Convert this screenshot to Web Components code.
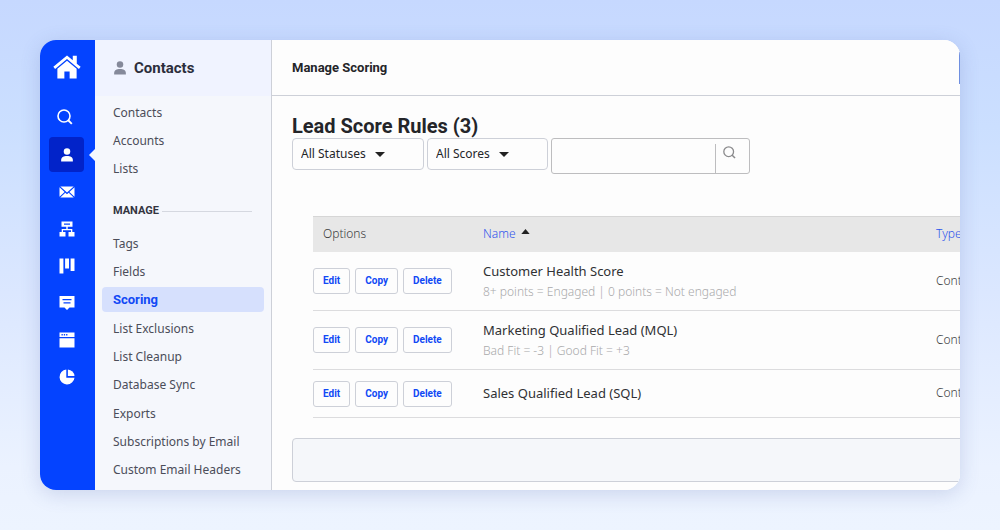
<!DOCTYPE html>
<html lang="en">
<head>
<meta charset="utf-8">
<meta name="viewport" content="width=device-width, initial-scale=1">
<title>Manage Scoring</title>
<style>
  :root {
    --blue: #0443ff;
    --link: #1149f5;
    --ink: #242529;
    --line: #cdd0d8;
    --paper: #fdfdfd;
    --strong: Roboto, "Noto Sans", sans-serif;
  }
  * { box-sizing: border-box; }
  body {
    margin: 0;
    min-height: 100vh;
    display: flex;
    padding: 40px;
    font: 12px/16px "Noto Sans", Roboto, sans-serif;
    color: var(--ink);
    background: linear-gradient(#c6d8ff 0%, #cbdfff 24%, #dbe7ff 55%, #ebf2ff 88%, #edf4ff 100%);
  }
</style>
</head>
<body>
<score-app></score-app>
<script>
const define = (name, html, setup) => {
  const template = document.createElement('template');
  template.innerHTML = `<style>*{box-sizing:border-box}</style>${html}`;
  customElements.define(name, class extends HTMLElement {
    connectedCallback() {
      if (this.shadowRoot) return;
      const content = template.content.cloneNode(true);
      if (setup) setup(this, content);
      this.attachShadow({ mode: 'open' }).append(content);
    }
  });
};

const icons = {
  home: '<path d="M8 .9 .2 7.300l1 1.200L8 2.900l6.800 5.600 1-1.200-2.200-1.800V1h-2.300v2.600z"/><path d="M8 3.900 2.500 8.400V14h4v-4h3v4h4V8.400z"/>',
  search: '<circle cx="7" cy="7" r="6" fill="none" stroke="currentColor" stroke-width="1.600"/><path d="m11 11 3.800 3.800" stroke="currentColor" stroke-width="1.900"/>',
  person: '<circle cx="8" cy="4" r="3.700"/><path d="M1.300 15.500v-1.800C1.300 10.600 4 9 8 9s6.700 1.600 6.700 4.700v1.800z"/>',
  mail: '<path d="M.5 3.300 5.600 8 .5 12.700zM15.500 3.300 10.400 8l5.100 4.700zM1.300 2.400h13.400L8 8.600zM6.300 8.700 8 10.200l1.700-1.500 5 4.900H1.300z"/>',
  flow: '<path fill-rule="evenodd" d="M2.500.5h11v5.300H8.700v2.100h4.600v3.200h2.200v4.400h-6v-4.400h2.500V9.200H4v1.900h2.500v4.400h-6v-4.400h2.200V7.900h4.600V5.800H2.500zM5 2.500v1.200h6V2.500z"/>',
  board: '<path d="M.5.500h3.900v15H.5zM6.100.500H10v10H6.100zM11.600.500h3.900v12.500h-3.900z"/>',
  chat: '<path fill-rule="evenodd" d="M.5 1h15v11.500h-5L8 15l-2.500-2.500h-5zM3.500 4v1.300h9V4zm1 3.300v1.300h7V7.300z"/>',
  window: '<path fill-rule="evenodd" d="M.5.500h15v4.600H.5zM2.500 2.100v1.500h1.300V2.100zm2.300 0v1.500h1.300V2.100zm2.300 0v1.500h1.300V2.100zM.5 6.300h15v9.200H.5z"/>',
  pie: '<path d="M7.300.500A7.500 7.500 0 1 0 15.500 8.700H7.300z"/><path d="M8.900.500v6.600h6.600A7.200 7.200 0 0 0 8.900.500z"/>',
};

define('app-icon', `
  <style>:host{display:block} svg{display:block;width:100%;height:100%;fill:currentColor}</style>
  <svg viewBox="0 0 16 16" aria-hidden="true"></svg>`,
  (host, root) => { root.querySelector('svg').innerHTML = icons[host.getAttribute('name')]; });

define('rail-button', `
  <style>
    :host{display:block}
    button{display:grid;place-items:center;width:35px;height:35px;padding:0;border:0;border-radius:4px;background:none;color:#fff}
    :host([active]) button{background:#0223c9}
    app-icon{width:16px;height:16px}
    :host([small]) app-icon{width:14px;height:14px}
    :host([icon=search]) button{padding:0 3px 2px 0}
  </style>
  <button type="button"><app-icon></app-icon></button>`,
  (host, root) => {
    root.querySelector('button').setAttribute('aria-label', host.getAttribute('label'));
    root.querySelector('app-icon').setAttribute('name', host.getAttribute('icon'));
  });

define('icon-rail', `
  <style>
    :host{display:block;flex:0 0 55px;background:var(--blue);color:#fff}
    nav{display:grid;grid-template-columns:53px;justify-items:center;gap:2px;padding-top:14px}
    .home{display:block;color:#fff;margin-bottom:16px}
    .home app-icon{width:28px;height:28px}
    .current{position:relative;justify-self:stretch;display:grid;justify-content:center}
    .current::after{content:"";position:absolute;right:-2px;top:12px;border:6px solid transparent;border-left:0;border-right:6px solid #f5f7fd}
  </style>
  <nav aria-label="Main">
    <a class="home" href="#home" aria-label="Home"><app-icon name="home"></app-icon></a>
    <rail-button icon="search" label="Search"></rail-button>
    <div class="current"><rail-button icon="person" label="Contacts" active small></rail-button></div>
    <rail-button icon="mail" label="Campaigns"></rail-button>
    <rail-button icon="flow" label="Automations"></rail-button>
    <rail-button icon="board" label="Deals"></rail-button>
    <rail-button icon="chat" label="Conversations"></rail-button>
    <rail-button icon="window" label="Website"></rail-button>
    <rail-button icon="pie" label="Reports"></rail-button>
  </nav>`);

define('side-link', `
  <style>
    :host{display:grid;align-items:center}
    a{display:block;padding:5px 11px 4px;border-radius:4px;color:#4b4d59;text-decoration:none;white-space:nowrap}
    :host([active]) a{background:#d6e0fd;color:var(--link);font:700 13px/16px var(--strong)}
  </style>
  <a href="#"><slot></slot></a>`);

define('side-menu', `
  <style>
    :host{display:flex;flex-direction:column;flex:0 0 177px;background:#f5f7fc;border-right:1px solid var(--line)}
    header{display:flex;align-items:center;gap:7px;height:56px;padding-left:18px;background:#f0f3ff}
    header app-icon{width:14px;height:14px;color:#85899a}
    h2{margin:0;font:700 15px/20px var(--strong);color:#2c2e3c}
    nav{flex:1;display:flex;flex-direction:column;padding:2px 7px 6px}
    .group{display:grid;grid-auto-rows:1fr}
    .top{flex:3}
    .manage{flex:9}
    h3{display:flex;align-items:center;gap:3px;margin:20px 12px 10px 11px;font:700 11px/16px var(--strong);color:#33353f}
    h3::after{content:"";flex:1;border-top:1px solid #d5d8e0}
  </style>
  <header><app-icon name="person"></app-icon><h2>Contacts</h2></header>
  <nav aria-label="Contacts">
    <div class="group top">
      <side-link>Contacts</side-link><side-link>Accounts</side-link><side-link>Lists</side-link>
    </div>
    <h3>MANAGE</h3>
    <div class="group manage">
      <side-link>Tags</side-link><side-link>Fields</side-link><side-link active>Scoring</side-link>
      <side-link>List Exclusions</side-link><side-link>List Cleanup</side-link><side-link>Database Sync</side-link>
      <side-link>Exports</side-link><side-link>Subscriptions by Email</side-link><side-link>Custom Email Headers</side-link>
    </div>
  </nav>`);

define('filter-select', `
  <style>
    :host{display:grid;align-items:center;height:32px}
    select,svg{grid-area:1/1}
    select{appearance:none;width:100%;height:100%;margin:0;padding:0 40px 0 8px;border:1px solid var(--line);border-radius:4px;background:var(--paper);font:inherit;color:var(--ink)}
    svg{justify-self:end;margin-right:39px;width:10px;height:5px;fill:#222;pointer-events:none}
  </style>
  <select><option></option></select>
  <svg viewBox="0 0 10 5" aria-hidden="true"><path d="M0 0h10L5 5z"/></svg>`,
  (host, root) => {
    root.querySelector('select').setAttribute('aria-label', host.getAttribute('label'));
    root.querySelector('option').textContent = host.getAttribute('value');
  });

define('search-box', `
  <style>
    :host{display:block}
    form{display:flex;align-items:flex-end;height:36px;margin:0;border:1px solid #bdbdbf;border-radius:3px}
    input{flex:1;min-width:0;height:34px;padding:0 8px;border:0;background:none;font:inherit;outline:0}
    button{width:34px;height:29px;padding:2px 0 0 7px;display:flex;align-items:flex-start;border:0;border-left:1px solid #bdbdbf;background:none;color:#8b8b8d}
    app-icon{width:13px;height:13px}
  </style>
  <form role="search"><input type="text" aria-label="Search rules"><button type="button" aria-label="Search"><app-icon name="search"></app-icon></button></form>`);

define('rule-button', `
  <style>
    :host{display:block}
    button{height:26px;padding:0 9px;border:1px solid var(--line);border-radius:3px;background:var(--paper);color:var(--link);font:700 10px/16px var(--strong)}
  </style>
  <button type="button"><slot></slot></button>`);

const rules = [
  ['Customer Health Score', '8+ points = Engaged | 0 points = Not engaged'],
  ['Marketing Qualified Lead (MQL)', 'Bad Fit = -3 | Good Fit = +3'],
  ['Sales Qualified Lead (SQL)', ''],
];

define('rules-table', `
  <style>
    :host{display:block}
    table{width:100%;border-collapse:collapse;table-layout:fixed}
    .options{width:160px}
    .type{width:100px}
    th{height:35px;padding:0 10px;text-align:left;font-weight:300;background:#e7e7e7;border-top:1px solid #d6d6d6;color:#3c3c3e}
    th a{color:#2e55ec;text-decoration:none}
    th svg{width:9px;height:5px;margin-left:2px;vertical-align:4px;fill:#222}
    td{padding:10px;border-bottom:1px solid #dcdcde}
    td:first-child{padding:11px 0 10px}
    td:last-child{font-weight:300;color:#3c3c3e}
    .actions{display:flex;gap:5px}
    .name{font-size:13px;line-height:18px;color:#303134}
    .note{margin-top:3px;line-height:17px;font-weight:300;color:#a9a9ab}
    .note:empty{display:none}
  </style>
  <table>
    <colgroup><col class="options"><col><col class="type"></colgroup>
    <thead><tr>
      <th scope="col">Options</th>
      <th scope="col" aria-sort="ascending"><a href="#name">Name</a> <svg viewBox="0 0 10 6" aria-hidden="true"><path d="M0 6h10L5 0z"/></svg></th>
      <th scope="col"><a href="#type">Type</a></th>
    </tr></thead>
    <tbody></tbody>
  </table>`,
  (host, root) => {
    root.querySelector('tbody').innerHTML = rules.map(([name, note]) => `<tr>
      <td><div class="actions"><rule-button>Edit</rule-button><rule-button>Copy</rule-button><rule-button>Delete</rule-button></div></td>
      <td><div class="name">${name}</div><div class="note">${note}</div></td>
      <td>Contact</td></tr>`).join('');
  });

define('scoring-page', `
  <style>
    :host{display:block;flex:1;min-width:0;overflow:hidden;background:var(--paper)}
    header{display:flex;align-items:center;justify-content:space-between;height:56px;padding-left:20px;border-bottom:1px solid var(--line)}
    h1{margin:0;font:700 13px/16px var(--strong)}
    header button{flex:none;width:120px;height:32px;margin-right:-119px;border:1px solid #6f8fe0;border-radius:0;background:#fff}
    section{padding:18px 0 0 20px}
    h2{margin:0;font:700 20px/24px var(--strong)}
    .filters{display:flex;align-items:flex-start;gap:3px}
    .statuses{width:132px}
    .scores{width:121px}
    search-box{width:199px}
    rules-table{margin:42px -66px 20px 21px}
    footer{height:44px;margin-right:-66px;border:1px solid var(--line);border-radius:4px;background:#f5f7fa}
  </style>
  <header><h1>Manage Scoring</h1><button type="button" aria-label="Add rule"></button></header>
  <section>
    <h2>Lead Score Rules (3)</h2>
    <div class="filters">
      <filter-select class="statuses" label="Status" value="All Statuses"></filter-select>
      <filter-select class="scores" label="Score" value="All Scores"></filter-select>
      <search-box></search-box>
    </div>
    <rules-table></rules-table>
    <footer></footer>
  </section>`);

define('score-app', `
  <style>
    :host{display:flex;flex:1;min-width:0;border-radius:16px;overflow:hidden;background:var(--paper);box-shadow:0 4px 20px rgba(70,90,160,.2)}
  </style>
  <icon-rail></icon-rail><side-menu></side-menu><scoring-page></scoring-page>`);
</script>
</body>
</html>
